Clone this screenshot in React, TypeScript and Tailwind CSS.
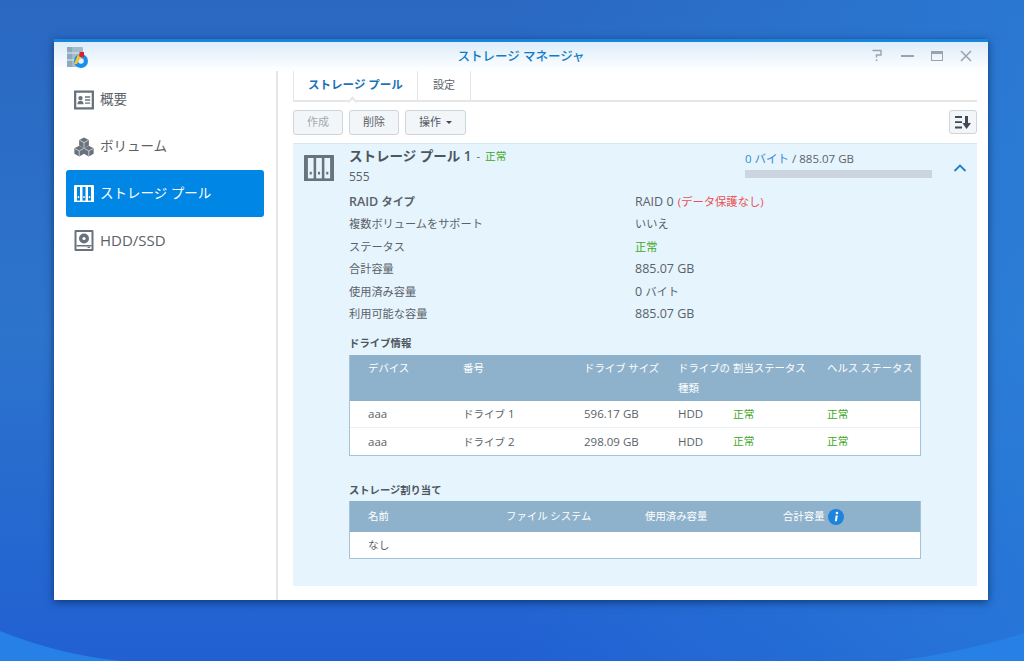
const cjk = { fontFamily: '"Open Sans","Noto Sans CJK JP",sans-serif' };

function AppIcon() {
  return (
    <svg width="24" height="23" viewBox="0 0 24 23">
      <rect x="1" y="1" width="16" height="20" rx="1" fill="#a3bccb" />
      <rect x="1" y="1" width="5" height="20" fill="#8ea9bb" />
      <path d="M1 7h16M1 14h16" stroke="#e4edf2" strokeWidth="1.2" />
      <circle cx="15" cy="15" r="7" fill="#1b8fe8" />
      <circle cx="15" cy="15" r="2.8" fill="#e6f2fb" />
      <path d="M8 18 L12 8.5 L15.5 11.5 L13 14 L11 18 Z" fill="#f4c430" />
      <rect x="13.5" y="6" width="4.5" height="5" fill="#d9202a" />
    </svg>
  );
}
function OverviewIcon() {
  return (
    <svg width="21" height="20" viewBox="0 0 21 20">
      <rect x="1.2" y="1.2" width="18.6" height="17.6" fill="#fff" stroke="#69737d" strokeWidth="2.4" />
      <circle cx="6.8" cy="8" r="2.3" fill="#69737d" />
      <path d="M3.6 14.5c0-2.6 1.4-3.6 3.2-3.6s3.2 1 3.2 3.6z" fill="#69737d" />
      <path d="M11.5 6.8h5.5M11.5 10h5.5M11.5 13.3h5.5" stroke="#69737d" strokeWidth="1.5" />
    </svg>
  );
}
function VolumeIcon() {
  const cube = (x: number, y: number) => (
    <g transform={`translate(${x} ${y})`}>
      <path d="M6 0l5.6 3v6.2L6 12.4.4 9.2V3z" fill="#69737d" />
      <path d="M.8 3.2L6 6l5.2-2.8M6 6v6" stroke="#fff" strokeWidth="0.7" fill="none" />
    </g>
  );
  return (
    <svg width="23" height="22" viewBox="0 0 23 22">
      {cube(5.5, 0)}
      {cube(0, 9.5)}
      {cube(11, 9.5)}
    </svg>
  );
}
function PoolIcon({ fg, bg, size, slot }: { fg: string; bg: string; size: number; slot: number }) {
  return (
    <svg width={size} height={size * 0.88} viewBox="0 0 20 17.6">
      <rect width="20" height="17.6" rx="0.5" fill={fg} />
      {[4.5, 10, 15.5].map((cx) => (
        <g key={cx}>
          <rect x={cx - slot / 2} y="2" width={slot} height="13.6" fill={bg} />
          <rect x={cx - 0.7} y="11.2" width="1.4" height="1.8" fill={fg} />
        </g>
      ))}
    </svg>
  );
}
function HddIcon() {
  return (
    <svg width="20" height="21" viewBox="0 0 20 21">
      <rect x="0.5" width="19" height="21" rx="1" fill="#69737d" />
      <rect x="2.5" y="2" width="15" height="17" fill="#fff" />
      <circle cx="10" cy="8.5" r="5" fill="#69737d" />
      <circle cx="10" cy="8.5" r="1.6" fill="#fff" />
      <rect x="2.5" y="15" width="15" height="1.5" fill="#69737d" />
      <rect x="13.5" y="16.8" width="2.5" height="1.2" fill="#69737d" />
    </svg>
  );
}
function SortIcon() {
  return (
    <svg width="16" height="13" viewBox="0 0 16 13">
      <path d="M0 1h7M0 6.2h7M0 11.5h7" stroke="#3f4a55" strokeWidth="1.8" />
      <path d="M10 0h3v7h3l-4.5 6L7.5 7H10z" fill="#3f4a55" />
    </svg>
  );
}
function WinButtons() {
  return (
    <div className="flex items-center gap-[17px] pb-[2px] pr-[16px]">
      <svg width="13" height="13" viewBox="0 0 13 13" fill="none">
        <path d="M1.5 1.5h8.5v4.5H5.5v2.5" stroke="#9aa3ab" strokeWidth="1.4" />
        <rect x="4.8" y="10.4" width="1.6" height="1.6" fill="#9aa3ab" />
      </svg>
      <div className="h-[2px] w-[13px] bg-[#9aa3ab]" />
      <div className="h-[10px] w-[12px] border border-t-[3px] border-[#9aa3ab]" />
      <svg width="12" height="12" viewBox="0 0 12 12">
        <path d="M1 1l10 10M11 1L1 11" stroke="#9aa3ab" strokeWidth="1.5" />
      </svg>
    </div>
  );
}

const nav = [
  { label: '概要', icon: <OverviewIcon />, size: 'text-[13.5px]' },
  { label: 'ボリューム', icon: <VolumeIcon />, size: 'text-[13.5px]' },
  { label: 'ストレージ プール', icon: <PoolIcon fg="#fff" bg="#0086e5" size={20} slot={3} />, active: true, size: 'text-[13.5px]' },
  { label: 'HDD/SSD', icon: <HddIcon />, size: 'text-[15px]' },
];

const details: [React.ReactNode, React.ReactNode][] = [
  [<span className="font-semibold">RAID <span className="text-[11.2px]">タイプ</span></span>, <>RAID 0 <span className="ml-[1px] text-[11.3px] text-[#ec4f4f]">(データ保護なし)</span></>],
  [<span className="text-[11.2px]">複数ボリュームをサポート</span>, <span className="text-[11.2px]">いいえ</span>],
  [<span className="text-[11.2px]">ステータス</span>, <span className="text-[11.2px] text-[#3da822]">正常</span>],
  [<span className="text-[11.2px]">合計容量</span>, '885.07 GB'],
  [<span className="text-[11.2px]">使用済み容量</span>, <>0 <span className="text-[11.2px]">バイト</span></>],
  [<span className="text-[11.2px]">利用可能な容量</span>, '885.07 GB'],
];

const driveCols = 'grid grid-cols-[95px_121px_94px_55px_94px_94px] pl-[18px]';
const drives = [
  ['aaa', 'ドライブ', '1', '596.17 GB'],
  ['aaa', 'ドライブ', '2', '298.09 GB'],
];
const allocCols = 'grid grid-cols-[138px_139px_138px_1fr] pl-[18px]';

export default function App() {
  return (
    <div style={cjk} className="relative h-[661px] w-[1024px] overflow-hidden bg-gradient-to-b from-[#2a68c2] via-[#2d74cc] to-[#2160d2]">
      <div className="absolute inset-0 bg-gradient-to-r from-transparent via-transparent to-[#2a82dc]/60" />
      <svg className="absolute inset-0" width="1024" height="661" viewBox="0 0 1024 661">
        <path d="M0 631 Q60 655 122 661 H0Z" fill="#2680e6" />
        <path d="M1024 633 Q965 652 895 661 H1024Z" fill="#2680e6" />
      </svg>
      <div className="absolute left-[54px] top-[39px] flex h-[561px] w-[934px] flex-col overflow-hidden border-t-[3px] border-[#1784dd] bg-white shadow-[0_2px_8px_rgba(10,40,90,0.75)]">
        <header className="relative flex h-[29px] shrink-0 items-center justify-end bg-gradient-to-b from-[#dcecf9] to-white">
          <div className="absolute left-[12px] top-[4px]"><AppIcon /></div>
          <div className="absolute inset-x-0 top-[5px] text-center text-[12.5px] font-medium leading-[20px] text-[#0f7cc9]">ストレージ マネージャ</div>
          <WinButtons />
        </header>
        <div className="flex min-h-0 flex-1">
          <aside className="flex w-[224px] shrink-0 flex-col border-r-2 border-[#e6e6e6] pl-[12px] pr-[10px] pt-[5px]">
            {nav.map((n) => (
              <div
                key={n.label}
                className={`flex h-[47px] w-[198px] items-center gap-[6px] rounded-[3px] pl-[8px] ${n.size} ${n.active ? 'bg-[#0086e5] text-white' : 'text-[#5a6268]'}`}
              >
                <span className="flex w-[20px] justify-center">{n.icon}</span>
                <span>{n.label}</span>
              </div>
            ))}
          </aside>
          <main className="flex min-w-0 flex-1 flex-col pl-[15px] pr-[11px]">
            <div className="relative flex h-[31px] shrink-0 items-stretch border-b-2 border-[#e6e6e6]">
              <div className="flex w-[125px] items-center justify-center border-x border-[#e6e6e6] pb-[1px] text-[11.5px] font-semibold text-[#1a72b8]">ストレージ プール</div>
              <div className="flex w-[53px] items-center justify-center border-r border-[#e6e6e6] pb-[1px] text-[11px] text-[#5a6268]">設定</div>
              <div className="absolute bottom-[-2px] left-[56px] h-[7px] w-[7px] translate-y-[3px] rotate-45 border-l-2 border-t-2 border-[#e6e6e6] bg-white" />
            </div>
            <div className="flex h-[41px] shrink-0 items-center gap-[6px] pb-[1px] text-[11px]">
              <button className="h-[25px] w-[50px] rounded-[3px] border border-[#ccd5dc] bg-[#f3f6f8] text-[#a2a9af]">作成</button>
              <button className="h-[25px] w-[50px] rounded-[3px] border border-[#ccd5dc] bg-[#f3f6f8] text-[#5a6268]">削除</button>
              <button className="flex h-[25px] w-[61px] items-center justify-center gap-[5px] rounded-[3px] border border-[#ccd5dc] bg-[#f3f6f8] text-[#4f575d]">
                操作
                <span className="h-0 w-0 border-x-[3px] border-t-[3px] border-x-transparent border-t-[#3f4a55]" />
              </button>
              <button className="ml-auto flex h-[24px] w-[28px] items-center justify-center rounded-[3px] border border-[#ccd5dc] bg-[#f3f6f8]"><SortIcon /></button>
            </div>
            <section className="relative h-[443px] shrink-0 border-t border-[#d8e6ef] bg-[#e6f4fd] pl-[56px] text-[12.5px] text-[#5a6268]">
              <div className="absolute left-[11px] top-[11px]"><PoolIcon fg="#69737d" bg="#e6f4fd" size={30} slot={3.8} /></div>
              <div className="flex h-[22px] items-center gap-[5px] pt-[3px]">
                <span className="text-[13.5px] font-semibold text-[#4d565d]">ストレージ プール 1</span>
                <span className="text-[11px]">-</span>
                <span className="text-[10.7px] text-[#3da822]">正常</span>
              </div>
              <div className="flex h-[20px] items-center pt-[2px] text-[12px]">555</div>
              <div className="absolute left-[452px] top-[7px] w-[187px]">
                <div className="text-[11.5px] leading-[16px]"><span className="text-[#3d86cf]">0 バイト</span> / 885.07 GB</div>
                <div className="mt-[3px] h-[8px] bg-[#ccd5df]" />
              </div>
              <svg className="absolute right-[10px] top-[20px]" width="14" height="8" viewBox="0 0 14 8" fill="none">
                <path d="M1.5 7L7 1.5 12.5 7" stroke="#1a80cf" strokeWidth="1.8" />
              </svg>
              <dl className="mt-[5px]">
                {details.map(([k, v], i) => (
                  <div key={i} className="grid h-[22.5px] grid-cols-[286px_1fr] items-center">
                    <dt>{k}</dt>
                    <dd>{v}</dd>
                  </div>
                ))}
              </dl>
              <h3 className="mb-[2px] mt-[7px] h-[20px] text-[10.4px] font-semibold leading-[20px] text-[#4d565d]">ドライブ情報</h3>
              <div className="w-[572px] border border-t-0 border-[#a6c2d6] bg-white">
                <div className={`${driveCols} h-[46px] bg-[#8fb2cc] pt-[3px] text-[10.4px] leading-[20px] text-white`}>
                  <span>デバイス</span>
                  <span>番号</span>
                  <span>ドライブ サイズ</span>
                  <span className="whitespace-nowrap">ドライブの<br />種類</span>
                  <span className="whitespace-nowrap">割当ステータス</span>
                  <span className="whitespace-nowrap">ヘルス ステータス</span>
                </div>
                {drives.map((d, i) => (
                  <div key={d[2]} className={`${driveCols} h-[27px] items-center text-[11.5px] ${i === 0 ? 'border-b border-[#eaeff3]' : ''}`}>
                    <span>{d[0]}</span>
                    <span><span className="text-[10.5px]">{d[1]}</span> {d[2]}</span>
                    <span>{d[3]}</span>
                    <span>HDD</span>
                    <span className="text-[10.7px] text-[#3da822]">正常</span>
                    <span className="text-[10.7px] text-[#3da822]">正常</span>
                  </div>
                ))}
              </div>
              <h3 className="mb-[1px] mt-[24px] h-[20px] text-[10.3px] font-semibold leading-[20px] text-[#4d565d]">ストレージ割り当て</h3>
              <div className="w-[572px] border border-t-0 border-[#a6c2d6] bg-white">
                <div className={`${allocCols} h-[31px] items-center bg-[#8fb2cc] text-[10.4px] text-white`}>
                  <span>名前</span>
                  <span>ファイル システム</span>
                  <span>使用済み容量</span>
                  <span className="flex items-center gap-[3px]">
                    合計容量
                    <svg width="16" height="16" viewBox="0 0 15 15">
                      <circle cx="7.5" cy="7.5" r="7.5" fill="#1c84dc" />
                      <circle cx="8.4" cy="3.7" r="1.2" fill="#fff" />
                      <path d="M7.2 6h2l-1 5.6H6.4z" fill="#fff" />
                    </svg>
                  </span>
                </div>
                <div className={`${allocCols} h-[26px] items-center text-[10.7px]`}>
                  <span>なし</span>
                </div>
              </div>
            </section>
          </main>
        </div>
      </div>
    </div>
  );
}
